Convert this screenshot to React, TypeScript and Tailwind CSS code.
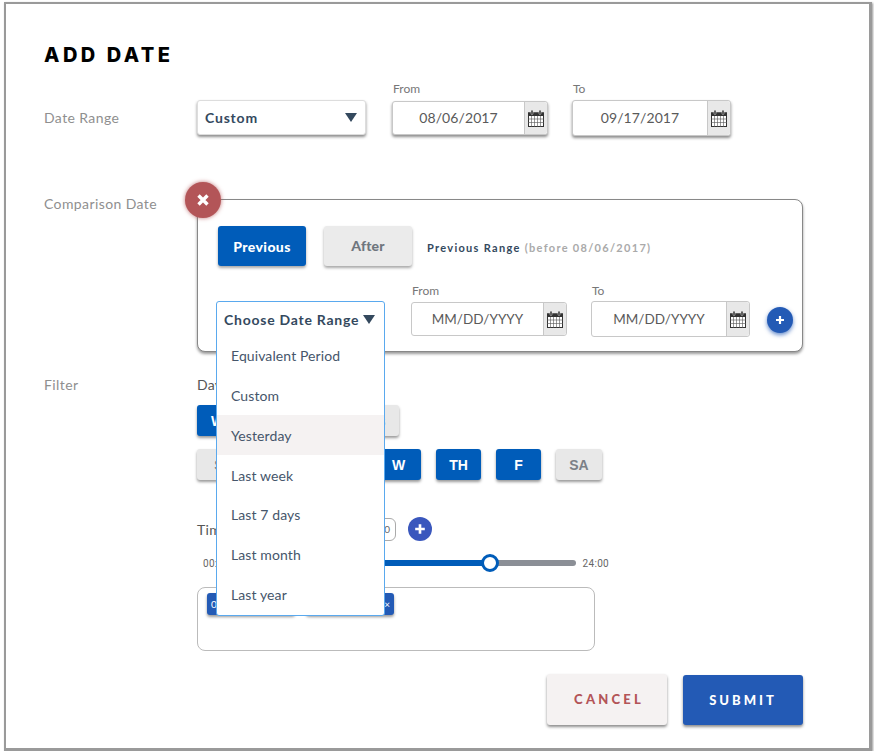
import React from "react";

const Cal = () => (
  <svg width="16" height="17" viewBox="0 0 16 17" className="block">
    <rect x="0.5" y="3" width="15" height="13.5" fill="#fff" stroke="#333" strokeWidth="1" />
    <rect x="0" y="2.5" width="16" height="3.5" fill="#333" />
    <rect x="3" y="0" width="2" height="4.5" rx="1" fill="#333" stroke="#e8e8e8" strokeWidth="0.5" />
    <rect x="11" y="0" width="2" height="4.5" rx="1" fill="#333" stroke="#e8e8e8" strokeWidth="0.5" />
    <path d="M0 9H16M0 12.5H16M3.5 6V17M6.5 6V17M9.5 6V17M12.5 6V17" stroke="#555" strokeWidth="0.6" />
  </svg>
);

const Tri = () => (
  <svg width="12" height="9" viewBox="0 0 12 9" className="block"><path d="M0 0H12L6 9Z" fill="#34495e" /></svg>
);

const Plus = ({ s = 10 }: { s?: number }) => (
  <svg width={s} height={s} viewBox="0 0 10 10" className="block"><path d="M5 1V9M1 5H9" stroke="#fff" strokeWidth="2.2" /></svg>
);

function DateBox({ label, value, className, inputClass, mt, raised, textClass }: { label: string; value: string; className: string; inputClass: string; mt: string; raised?: boolean; textClass: string }) {
  return (
    <div className={className}>
      <div className="h-[14px] pl-px text-[12px] leading-[14px] text-[#777]">{label}</div>
      <div className={`${mt} ${inputClass} flex rounded-[3px] border border-[#c8c8c8] bg-white ${raised ? "shadow-[0_2px_3px_rgba(0,0,0,0.45)]" : ""}`}>
        <div className={`flex flex-1 items-center justify-center text-[#5a5a5a] ${textClass}`}>{value}</div>
        <div className="flex w-[23px] items-center justify-center rounded-r-[3px] border-l border-[#c8c8c8] bg-[#e8e8e8]"><Cal /></div>
      </div>
    </div>
  );
}

const dayBase = "flex h-[31px] w-[45px] items-center justify-center rounded-[3px] pt-px text-[14px] font-bold shadow-[0_2px_3px_rgba(0,0,0,0.4)] [font-family:'Liberation_Sans',sans-serif]";
const blue = "bg-[#005cb9] text-white";
const grey = "bg-[#e8e8e8] text-[#7b8087]";

const options = ["Equivalent Period", "Custom", "Yesterday", "Last week", "Last 7 days", "Last month", "Last year"];

export default function App() {
  return (
    <div className="ml-[4px] mt-[2px] h-[749px] w-[868px] border-2 border-r-[3px] border-b-[3px] border-[#9a9a9a] bg-white pl-[38px] pt-[40px] shadow-[1px_1px_2px_rgba(0,0,0,0.4)] [font-family:Lato,sans-serif]">
      <h1 className="h-[22px] text-[20px] font-extrabold leading-[22px] tracking-[3.5px] text-black [font-family:Inter,sans-serif]">ADD DATE</h1>

      <div className="mt-[16px] flex">
        <div className="mt-[26px] h-[20px] w-[153px] text-[14px] leading-[20px] tracking-[0.4px] text-[#8f8f8f]">Date Range</div>
        <div className="mt-[18px] flex h-[35px] w-[169px] items-center justify-between rounded-[3px] border border-[#ddd] bg-white pl-[7px] pr-[8px] text-[14px] font-bold tracking-[0.8px] text-[#34495e] shadow-[0_2px_3px_rgba(0,0,0,0.45)]">
          Custom <Tri />
        </div>
        <DateBox label="From" value="08/06/2017" className="ml-[26px] w-[156px]" inputClass="h-[34px]" mt="mt-[5px]" raised textClass="pb-px text-[14px] tracking-[0.1px]" />
        <DateBox label="To" value="09/17/2017" className="ml-[24px] w-[159px]" inputClass="h-[36px]" mt="mt-[4px]" raised textClass="pb-px text-[14px] tracking-[0.1px]" />
      </div>

      <div className="mt-[58px] flex">
        <div className="h-[20px] w-[153px] text-[14px] leading-[20px] tracking-[0.4px] text-[#8f8f8f]">Comparison Date</div>
        <div className="relative mt-[5px] h-[153px] w-[606px] rounded-[8px] border border-[#888] bg-white pl-[20px] pt-[26px] shadow-[0_2px_3px_rgba(0,0,0,0.4)]">
          <div className="absolute left-[-13px] top-[-18px] flex h-[36px] w-[36px] items-center justify-center rounded-full bg-[#b35558] shadow-[0_0_4px_rgba(179,85,88,0.8)]">
            <svg width="14" height="14" viewBox="0 0 14 14"><path d="M2.5 2.5L11.5 11.5M11.5 2.5L2.5 11.5" stroke="#fff" strokeWidth="3.4" /></svg>
          </div>

          <div className="flex items-center">
            <div className="flex h-[40px] w-[88px] items-center justify-center rounded-[3px] bg-[#005cb9] text-[14px] font-black tracking-[0.4px] text-white shadow-[0_2px_3px_rgba(0,0,0,0.35)]">Previous</div>
            <div className="ml-[18px] flex h-[40px] w-[88px] items-center justify-center rounded-[3px] bg-[#ebebeb] pb-[2px] text-[14px] font-black tracking-[0.2px] text-[#6f767e] shadow-[0_2px_3px_rgba(0,0,0,0.35)]">After</div>
            <div className="ml-[15px] pt-[4px] text-[11px] tracking-[1.3px] text-[#34495e]"><span className="font-bold">Previous Range</span> <span className="font-bold text-[#aaa]">(before 08/06/2017)</span></div>
          </div>

          <div className="ml-[193px] mt-[18px] flex">
            <DateBox label="From" value="MM/DD/YYYY" className="w-[156px]" inputClass="h-[34px]" mt="mt-[4px]" textClass="text-[13.5px]" />
            <DateBox label="To" value="MM/DD/YYYY" className="ml-[24px] w-[159px]" inputClass="h-[36px]" mt="mt-[3px]" textClass="text-[13.5px]" />
            <div className="ml-[17px] mt-[23px] flex h-[26px] w-[26px] items-center justify-center rounded-full bg-[#235ab5] shadow-[0_2px_4px_rgba(35,90,181,0.7)]"><Plus /></div>
          </div>

          <div className="absolute left-[18px] top-[101px] z-10 h-[315px] w-[169px] rounded-[3px] border border-[#5aa9ee] bg-white">
            <div className="flex h-[28px] items-center gap-[4px] pl-[7px] pt-[6px] text-[14px] font-bold tracking-[0.75px] text-[#34495e]">Choose Date Range <Tri /></div>
            <div className="mt-[5px]">
              {options.map((o) => (
                <div key={o} className={`flex items-center pl-[14px] text-[14px] tracking-[0.1px] text-[#46566b] ${o === "Last 7 days" ? "h-[39px]" : "h-[40px]"} ${o === "Yesterday" ? "bg-[#f5f2f2]" : ""}`}>{o}</div>
              ))}
            </div>
          </div>
        </div>
      </div>

      <div className="mt-[23px] flex">
        <div className="h-[20px] w-[153px] text-[14px] leading-[20px] tracking-[0.4px] text-[#8f8f8f]">Filter</div>
        <div className="w-[650px]">
          <div className="h-[20px] text-[14px] leading-[20px] tracking-[0.3px] text-[#555]">Days</div>
          <div className="mt-[10px] flex gap-[10px]">
            <div className={`${dayBase} !w-[96px] ${blue}`}>Weekdays</div>
            <div className={`${dayBase} !w-[96px] ${grey}`}>Weekends</div>
          </div>
          <div className="mt-[13px] flex gap-[15px]">
            <div className={`${dayBase} !w-[44px] ${grey}`}>S</div>
            <div className={`${dayBase} ${blue}`}>M</div>
            <div className={`${dayBase} ${blue}`}>T</div>
            <div className={`${dayBase} ${blue}`}>W</div>
            <div className={`${dayBase} ${blue}`}>TH</div>
            <div className={`${dayBase} ${blue}`}>F</div>
            <div className={`${dayBase} !w-[46px] ${grey}`}>SA</div>
          </div>

          <div className="mt-[37px] flex h-[24px] items-center">
            <div className="w-[52px] text-[14px] tracking-[0.3px] text-[#555]">Time</div>
            <div className="flex h-[23px] w-[147px] items-center justify-end rounded-[6px] border border-[#aaa] pr-[5px] text-[10px] text-[#666]">00:00 - 14:00</div>
            <div className="ml-[12px] flex h-[24px] w-[24px] items-center justify-center rounded-full bg-[#3a57bd]"><Plus s={12} /></div>
          </div>

          <div className="mt-[12px] flex h-[20px] w-[412px] items-center text-[10px] tracking-[0.3px] text-[#666] [font-family:Roboto,sans-serif]">
            <span className="ml-[6px] w-[31px]">00:00</span>
            <div className="relative flex h-[6px] w-[342px] rounded-full bg-[#8b8f96]">
              <div className="h-[6px] w-[259px] rounded-l-full bg-[#005cb9]" />
              <div className="absolute left-[247px] top-[-6px] h-[18px] w-[18px] rounded-full border-[3px] border-[#005cb9] bg-white" />
            </div>
            <span className="ml-[7px]">24:00</span>
          </div>

          <div className="mt-[14px] flex h-[64px] w-[398px] items-start gap-[11px] rounded-[8px] border border-[#bbb] pl-[9px] pt-[5px]">
            {["00:00 - 14:00", "14:00 - 24:00"].map((t) => (
              <div key={t} className="flex h-[22px] w-[88px] items-center justify-between rounded-[3px] bg-[#235ab5] px-[4px] text-[10px] text-white shadow-[0_2px_3px_rgba(0,0,0,0.4)]">{t}<span>×</span></div>
            ))}
          </div>

          <div className="ml-[350px] mt-[23px] flex items-start gap-[16px]">
            <div className="flex h-[51px] w-[120px] items-center justify-center rounded-[3px] bg-[#f5f2f2] pl-[4px] pt-px text-[13px] font-black tracking-[3.2px] text-[#b35558] shadow-[0_2px_3px_rgba(0,0,0,0.45)]">CANCEL</div>
            <div className="mt-px flex h-[50px] w-[120px] items-center justify-center rounded-[3px] bg-[#235ab5] pt-px text-[13px] font-black tracking-[3px] text-white shadow-[0_2px_3px_rgba(0,0,0,0.45)]">SUBMIT</div>
          </div>
        </div>
      </div>
    </div>
  );
}
